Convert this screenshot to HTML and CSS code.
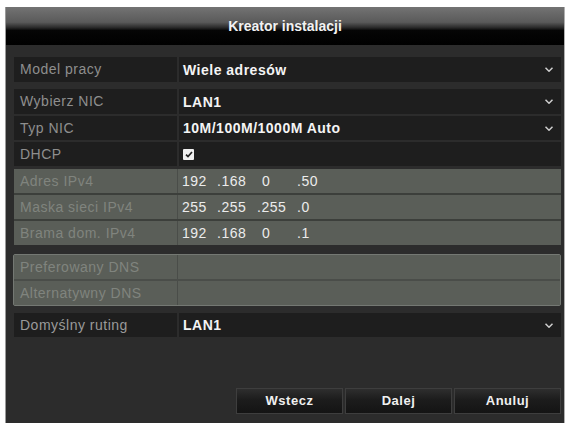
FILE: index.html
```html
<!DOCTYPE html>
<html lang="pl">
<head>
<meta charset="utf-8">
<title>Kreator instalacji</title>
<link rel="stylesheet" href="styles.css">
</head>
<body>
<div class="dialog">
  <div class="titlebar">Kreator instalacji</div>
  <div class="content">
    <div class="row dark">
      <div class="label">Model pracy</div>
      <div class="value strong">Wiele adresów<svg class="caret" width="8" height="5" viewBox="0 0 8 5"><path d="M0.5 0.8 L4 4.2 L7.5 0.8" fill="none" stroke="#d0d0d0" stroke-width="1.5"/></svg></div>
    </div>

    <div class="group-dark">
      <div class="row dark">
        <div class="label">Wybierz NIC</div>
        <div class="value strong">LAN1<svg class="caret" width="8" height="5" viewBox="0 0 8 5"><path d="M0.5 0.8 L4 4.2 L7.5 0.8" fill="none" stroke="#d0d0d0" stroke-width="1.5"/></svg></div>
      </div>
      <div class="row dark">
        <div class="label">Typ NIC</div>
        <div class="value strong">10M/100M/1000M Auto<svg class="caret" width="8" height="5" viewBox="0 0 8 5"><path d="M0.5 0.8 L4 4.2 L7.5 0.8" fill="none" stroke="#d0d0d0" stroke-width="1.5"/></svg></div>
      </div>
      <div class="row dark">
        <div class="label">DHCP</div>
        <div class="value"><span class="check"><svg width="8" height="7" viewBox="0 0 8 7"><path d="M1 3.6 L3 5.6 L7 1" fill="none" stroke="#222" stroke-width="1.7"/></svg></span></div>
      </div>
    </div>

    <div class="group-gray">
      <div class="row gray">
        <div class="label">Adres IPv4</div>
        <div class="value ip"><span class="oct">192</span><span class="oct"><span class="dot">.</span>168</span><span class="oct">0</span><span class="oct"><span class="dot">.</span>50</span></div>
      </div>
      <div class="row gray">
        <div class="label">Maska sieci IPv4</div>
        <div class="value ip"><span class="oct">255</span><span class="oct"><span class="dot">.</span>255</span><span class="oct"><span class="dot">.</span>255</span><span class="oct"><span class="dot">.</span>0</span></div>
      </div>
      <div class="row gray">
        <div class="label">Brama dom. IPv4</div>
        <div class="value ip"><span class="oct">192</span><span class="oct"><span class="dot">.</span>168</span><span class="oct">0</span><span class="oct"><span class="dot">.</span>1</span></div>
      </div>
    </div>

    <div class="group-dns">
      <div class="row gray">
        <div class="label">Preferowany DNS</div>
        <div class="value"></div>
      </div>
      <div class="row gray">
        <div class="label">Alternatywny DNS</div>
        <div class="value"></div>
      </div>
    </div>

    <div class="row dark route">
      <div class="label">Domyślny ruting</div>
      <div class="value strong">LAN1<svg class="caret" width="8" height="5" viewBox="0 0 8 5"><path d="M0.5 0.8 L4 4.2 L7.5 0.8" fill="none" stroke="#d0d0d0" stroke-width="1.5"/></svg></div>
    </div>

    <div class="buttons">
      <div class="btn">Wstecz</div>
      <div class="btn">Dalej</div>
      <div class="btn">Anuluj</div>
    </div>
  </div>
</div>
</body>
</html>
```

FILE: styles.css
```css
html, body {
  margin: 0;
  padding: 0;
  background: #ffffff;
}
body {
  font-family: "Liberation Sans", Arial, sans-serif;
  font-size: 14px;
  letter-spacing: 0.5px;
  padding: 7px 0 0 5px;
  height: 423px;
  box-sizing: border-box;
  overflow: hidden;
}
.dialog {
  width: 560px;
  height: 416px;
  background: #2c2c2c;
  border-left: 1px solid #9a9a9a;
  border-right: 1px solid #b0b0b0;
  box-sizing: border-box;
  display: flex;
  flex-direction: column;
}
.titlebar {
  height: 38px;
  flex: none;
  box-sizing: border-box;
  padding-top: 11px;
  line-height: 16px;
  text-align: center;
  color: #f2f2f2;
  font-weight: bold;
  letter-spacing: 0;
  background: linear-gradient(to bottom, #737373 0%, #5a5a5a 40%, #2a2a2a 54%, #050505 62%, #000 100%);
}
.content {
  flex: 1;
  padding: 12px 3px 0 8px;
  display: flex;
  flex-direction: column;
}
.row {
  display: flex;
  height: 24px;
  gap: 2px;
}
.label {
  width: 163px;
  flex: none;
  box-sizing: border-box;
  padding-left: 6px;
  line-height: 24px;
  white-space: nowrap;
  overflow: hidden;
}
.value {
  flex: 1;
  display: flex;
  align-items: center;
  padding-left: 4px;
  padding-right: 8px;
  white-space: nowrap;
}
.dark .label,
.dark .value {
  background: #1e1e1e;
}
.dark .label {
  color: #8e8e8e;
}
.strong {
  color: #f4f4f4;
  font-weight: bold;
}
.caret {
  margin-left: auto;
}
.row.dark:first-child {
  height: 25px;
}
.group-dark {
  margin-top: 7px;
  display: flex;
  flex-direction: column;
  gap: 2px;
}
.check {
  width: 11px;
  height: 11px;
  background: #f0f0f0;
  border-radius: 1px;
  display: flex;
  align-items: center;
  justify-content: center;
}
.group-gray {
  margin-top: 3px;
  display: flex;
  flex-direction: column;
  gap: 2px;
  background: #3c3f3b;
}
.gray {
  gap: 1px;
  background: #4a4d49;
}
.gray .label,
.gray .value {
  background: #5a5e58;
}
.gray .label {
  color: #80847e;
}
.ip {
  color: #ececec;
}
.oct {
  width: 40px;
  flex: none;
}
.dot {
  margin-left: -5px;
}
.group-dns {
  margin-top: 9px;
  display: flex;
  flex-direction: column;
  gap: 2px;
  border: 1px solid #747873;
  border-radius: 2px;
  background: #4a4d49;
  margin-left: -1px;
}
.route {
  margin-top: 7px;
}
.route .label {
  color: #9a9a9a;
}
.buttons {
  margin-top: 51px;
  display: flex;
  justify-content: flex-end;
  gap: 2px;
}
.btn {
  width: 107px;
  height: 26px;
  box-sizing: border-box;
  line-height: 24px;
  text-align: center;
  color: #f0f0f0;
  font-weight: bold;
  font-size: 13px;
  border: 1px solid #3e3e3e;
  background: linear-gradient(to bottom, #2e2e2e 0%, #1c1c1c 45%, #141414 100%);
}
```
